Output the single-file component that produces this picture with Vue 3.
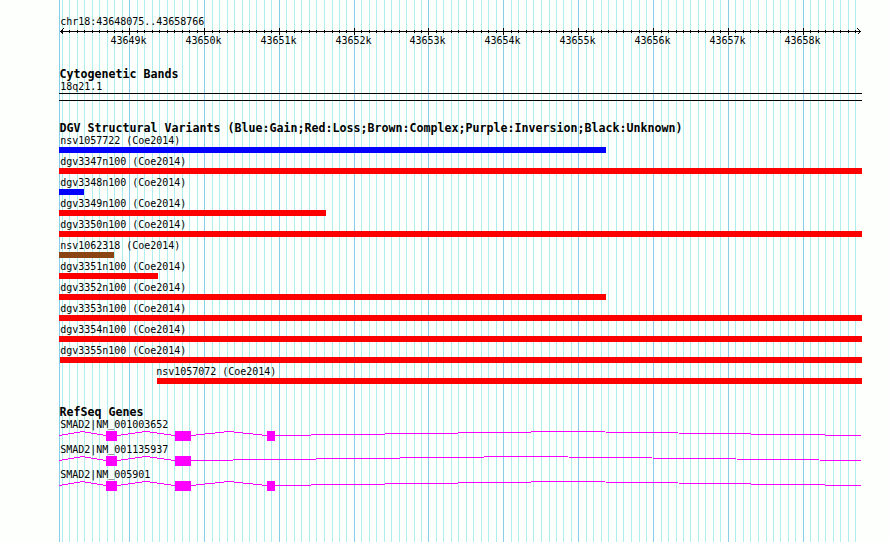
<script setup>
const START = 59;
const END = 862;
const HEIGHT = 542;

const region = "chr18:43648075..43658766";

// one line per 100 bp, snapped to whole pixels
const gridLines = [
  62, 69, 77, 84, 92, 99, 107, 114, 122, 129, 137, 144, 152, 159, 167, 174, 182,
  189, 197, 204, 212, 219, 227, 234, 242, 249, 256, 264, 271, 279, 286, 294,
  301, 309, 316, 324, 332, 339, 346, 354, 361, 369, 376, 384, 391, 399, 406,
  414, 421, 428, 436, 443, 451, 458, 466, 473, 481, 488, 496, 503, 511, 518,
  526, 533, 541, 549, 556, 563, 571, 578, 586, 593, 601, 608, 616, 623, 631,
  639, 646, 653, 661, 668, 676, 683, 690, 698, 705, 713, 720, 728, 735, 743,
  750, 758, 766, 773, 780, 788, 795, 803, 810, 818, 825, 833, 840, 848, 855,
].map((x, i) => ({ x, major: i % 10 === 9 }));

const majorLines = gridLines
  .filter((l) => l.major)
  .map((l, i) => ({ x: l.x, label: `${43649 + i}k` }));

const variants = [
  { name: "nsv1057722", from: 59, to: 606, type: "gain" },
  { name: "dgv3347n100", from: 59, to: 862, type: "loss" },
  { name: "dgv3348n100", from: 59, to: 84, type: "gain" },
  { name: "dgv3349n100", from: 59, to: 326, type: "loss" },
  { name: "dgv3350n100", from: 59, to: 862, type: "loss" },
  { name: "nsv1062318", from: 59, to: 114, type: "complex" },
  { name: "dgv3351n100", from: 59, to: 158, type: "loss" },
  { name: "dgv3352n100", from: 59, to: 606, type: "loss" },
  { name: "dgv3353n100", from: 59, to: 862, type: "loss" },
  { name: "dgv3354n100", from: 59, to: 862, type: "loss" },
  { name: "dgv3355n100", from: 60, to: 862, type: "loss" },
  { name: "nsv1057072", from: 157, to: 862, type: "loss" },
];

const exonsLong = [
  [106, 117],
  [175, 191],
  [267, 275],
];
const genes = [
  { symbol: "SMAD2", accession: "001003652", exons: exonsLong },
  { symbol: "SMAD2", accession: "001135937", exons: exonsLong.slice(0, 2) },
  { symbol: "SMAD2", accession: "005901", exons: exonsLong },
];

const labelOffset = (v) => Math.max(v.from - START - 2, 0);

// introns are drawn as shallow peaks between the exons
const intronPoints = (exons) => {
  const pts = [];
  let left = START;
  [...exons, [861, 861]].forEach(([from, to]) => {
    pts.push(`${left - START},4.5`);
    pts.push(`${(left + from) / 2 - START},0.5`);
    pts.push(`${from - START},4.5`);
    left = to;
  });
  return pts.join(" ");
};
</script>

<template>
  <div class="browser">
    <svg class="grid" width="890" :height="HEIGHT">
      <rect class="grid-major" :x="START" y="0" width="1" :height="HEIGHT" />
      <rect
        v-for="l in gridLines"
        :key="l.x"
        :class="l.major ? 'grid-major' : 'grid-minor'"
        :x="l.x"
        y="0"
        width="1"
        :height="HEIGHT"
      />
    </svg>

    <main class="tracks">
      <!-- ruler -->
      <section class="ruler">
        <div class="label">{{ region }}</div>
        <svg class="scale" width="803" height="26">
          <rect x="1" y="5" width="801" height="1" />
          <rect
            v-for="l in gridLines"
            :key="l.x"
            :x="l.x - START"
            :y="l.major ? 2 : 4"
            width="1"
            :height="l.major ? 7 : 3"
          />
          <path class="arrow" d="M4.5 2.5 L1.5 5.5 L4.5 8.5" />
          <path class="arrow" d="M798.5 2.5 L801.5 5.5 L798.5 8.5" />
          <text
            v-for="m in majorLines"
            :key="m.label"
            :x="m.x - START - 18.5"
            y="18"
          >
            {{ m.label }}
          </text>
        </svg>
      </section>

      <!-- cytoband -->
      <section class="cyto">
        <h2>Cytogenetic Bands</h2>
        <div class="label">18q21.1</div>
        <div class="band" />
      </section>

      <!-- structural variants -->
      <section class="variants">
        <h2>
          DGV Structural Variants
          (Blue:Gain;Red:Loss;Brown:Complex;Purple:Inversion;Black:Unknown)
        </h2>
        <div v-for="v in variants" :key="v.name" class="variant">
          <div class="label" :style="{ marginLeft: `${labelOffset(v)}px` }">
            {{ v.name }} (Coe2014)
          </div>
          <div
            class="bar"
            :class="v.type"
            :style="{
              marginLeft: `${v.from - START}px`,
              width: `${v.to - v.from}px`,
            }"
          />
        </div>
      </section>

      <!-- genes -->
      <section class="genes">
        <h2>RefSeq Genes</h2>
        <div v-for="g in genes" :key="g.accession" class="gene">
          <div class="label">
            {{ g.symbol }}|NM<span class="underscore">_</span
            >{{ g.accession }}
          </div>
          <svg class="transcript" :width="END - START" height="10">
            <polyline :points="intronPoints(g.exons)" />
            <rect
              v-for="[from, to] in g.exons"
              :key="from"
              :x="from - START"
              y="0"
              :width="to - from"
              height="10"
            />
          </svg>
        </div>
      </section>
    </main>
  </div>
</template>

<style>
body {
  margin: 0;
  background: #fcfffc;
}
</style>

<style scoped>
.browser {
  position: relative;
  width: 890px;
  height: 542px;
  overflow: hidden;
  color: #000;
  font-family: "DejaVu Sans Mono", monospace;
  font-size: 10px;
  letter-spacing: -0.02px;
}

.grid {
  position: absolute;
  top: 0;
  left: 0;
}
.grid-minor {
  fill: #afeeee;
}
.grid-major {
  fill: #87ceeb;
}

.tracks {
  position: relative;
  width: 803px;
  padding: 15px 0 0 59px;
}

h2 {
  margin: 0;
  height: 12px;
  padding-left: 0.6px;
  font-size: 11.65px;
  line-height: 12px;
  font-weight: 700;
  letter-spacing: -0.01px;
  white-space: nowrap;
}

.label {
  height: 11px;
  padding-left: 1.3px;
  line-height: 14px;
  white-space: nowrap;
}

.ruler {
  height: 53px;
}
.scale {
  display: block;
  shape-rendering: crispEdges;
}
.arrow {
  fill: none;
  stroke: #000;
}

.cyto {
  height: 54px;
}
.band {
  box-sizing: border-box;
  height: 8px;
  margin-top: 2px;
  border-top: 1px solid #000;
  border-bottom: 1px solid #000;
}

.variants {
  height: 284px;
}
.variant {
  height: 21px;
}
.variant .label {
  height: 13px;
}
.bar {
  height: 6px;
}
.gain {
  background: #0000ff;
}
.loss {
  background: #ff0000;
}
.complex {
  background: #8b4513;
}

.gene {
  height: 25px;
}
.gene .label {
  height: 13px;
}
/* keeps the underscore clear of the exon below it */
.underscore {
  line-height: 0;
  vertical-align: 1px;
}
.transcript {
  display: block;
  shape-rendering: crispEdges;
}
.transcript polyline {
  fill: none;
  stroke: #ff00ff;
}
.transcript rect {
  fill: #ff00ff;
}
</style>
